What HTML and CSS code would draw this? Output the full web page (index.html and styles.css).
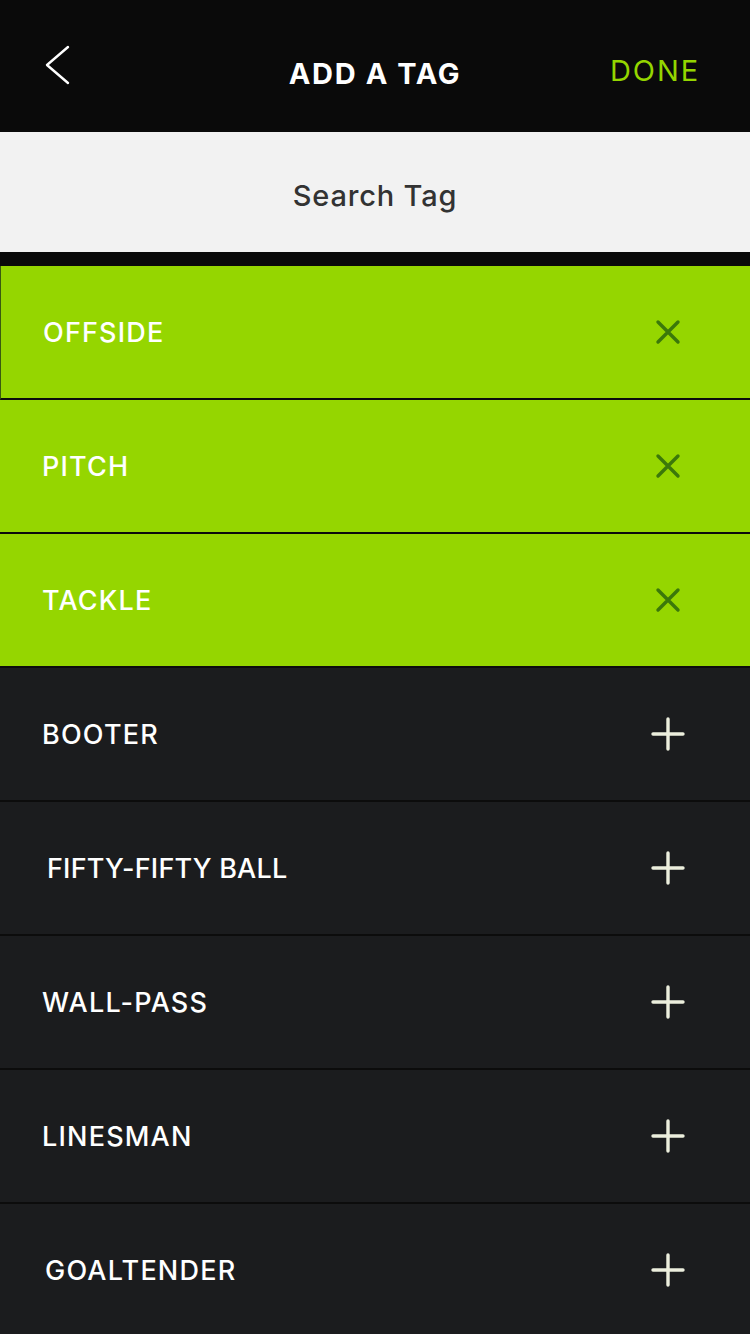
FILE: index.html
```html
<!DOCTYPE html>
<html>
<head>
<meta charset="utf-8">
<link rel="stylesheet" href="styles.css">
</head>
<body>
<div class="app">
  <header class="topbar">
    <svg class="back" width="30" height="40" viewBox="0 0 30 40"><path d="M25 2 L4 20 L25 38" fill="none" stroke="#fff" stroke-width="2.4" stroke-linecap="round" stroke-linejoin="round"/></svg>
    <h1 class="title">ADD A TAG</h1>
    <span class="done">DONE</span>
  </header>
  <div class="search">Search Tag</div>
  <div class="gap"></div>
  <ul class="tags">
    <li class="tag on"><span>OFFSIDE</span><span class="ibox"><svg width="26" height="26" viewBox="0 0 26 26"><path d="M3 3 L23 23 M23 3 L3 23" stroke="#3b780a" stroke-width="3.4" stroke-linecap="round"/></svg></span></li>
    <li class="tag on"><span>PITCH</span><span class="ibox"><svg width="26" height="26" viewBox="0 0 26 26"><path d="M3 3 L23 23 M23 3 L3 23" stroke="#3b780a" stroke-width="3.4" stroke-linecap="round"/></svg></span></li>
    <li class="tag on"><span>TACKLE</span><span class="ibox"><svg width="26" height="26" viewBox="0 0 26 26"><path d="M3 3 L23 23 M23 3 L3 23" stroke="#3b780a" stroke-width="3.4" stroke-linecap="round"/></svg></span></li>
    <li class="tag off"><span>BOOTER</span><span class="ibox"><svg width="34" height="34" viewBox="0 0 34 34"><path d="M17 2 V32 M2 17 H32" stroke="#eceedd" stroke-width="3.4" stroke-linecap="round"/></svg></span></li>
    <li class="tag off"><span class="ind tight">FIFTY-FIFTY BALL</span><span class="ibox"><svg width="34" height="34" viewBox="0 0 34 34"><path d="M17 2 V32 M2 17 H32" stroke="#eceedd" stroke-width="3.4" stroke-linecap="round"/></svg></span></li>
    <li class="tag off"><span>WALL-PASS</span><span class="ibox"><svg width="34" height="34" viewBox="0 0 34 34"><path d="M17 2 V32 M2 17 H32" stroke="#eceedd" stroke-width="3.4" stroke-linecap="round"/></svg></span></li>
    <li class="tag off"><span>LINESMAN</span><span class="ibox"><svg width="34" height="34" viewBox="0 0 34 34"><path d="M17 2 V32 M2 17 H32" stroke="#eceedd" stroke-width="3.4" stroke-linecap="round"/></svg></span></li>
    <li class="tag off"><span class="ind2">GOALTENDER</span><span class="ibox"><svg width="34" height="34" viewBox="0 0 34 34"><path d="M17 2 V32 M2 17 H32" stroke="#eceedd" stroke-width="3.4" stroke-linecap="round"/></svg></span></li>
  </ul>
</div>
</body>
</html>
```

FILE: styles.css
```css
* { box-sizing: border-box; }
html, body { margin: 0; padding: 0; background: #1b1c1e; }
body { font-family: Inter, "Open Sans", "Liberation Sans", sans-serif; }
.app { width: 750px; height: 1334px; overflow: hidden; display: flex; flex-direction: column; }
.app > * { flex-shrink: 0; }
.topbar {
  height: 132px; background: #0a0a0a; position: relative;
  display: flex; align-items: center; justify-content: center;
}
.back { position: absolute; left: 43px; top: 45px; }
.title {
  margin: 0; color: #fff; font-size: 29px; font-weight: 700; letter-spacing: 1.6px;
  padding-top: 14px;
}
.done {
  position: absolute; right: 50px; top: 53px;
  color: #94d500; font-size: 29px; font-weight: 400; letter-spacing: 1.9px;
}
.search {
  height: 120px; background: #f2f2f2; color: #333;
  display: flex; align-items: center; justify-content: center;
  font-size: 29px; font-weight: 500; letter-spacing: 0.8px; padding-top: 6px;
}
.gap { height: 14px; background: #0a0a0a; }
.tags { list-style: none; margin: 0; padding: 0; }
.tag {
  height: 134px; display: flex; align-items: center; justify-content: space-between;
  padding: 0 62px 0 42px; font-size: 27px; font-weight: 500; letter-spacing: 1.2px; color: #fff;
  border-bottom: 2px solid #0c0c0c;
}
.tag.on { background: #95d600; }
.tag.on:first-child { border-left: 1px solid #3a5a10; }
.tag.off { background: #1b1c1e; }
.tag .ind { margin-left: 5px; }
.tag .ind2 { margin-left: 3px; }
.tag .tight { letter-spacing: 0.2px; }
.ibox { width: 40px; height: 40px; display: flex; align-items: center; justify-content: center; }
.ibox svg { display: block; }
```
